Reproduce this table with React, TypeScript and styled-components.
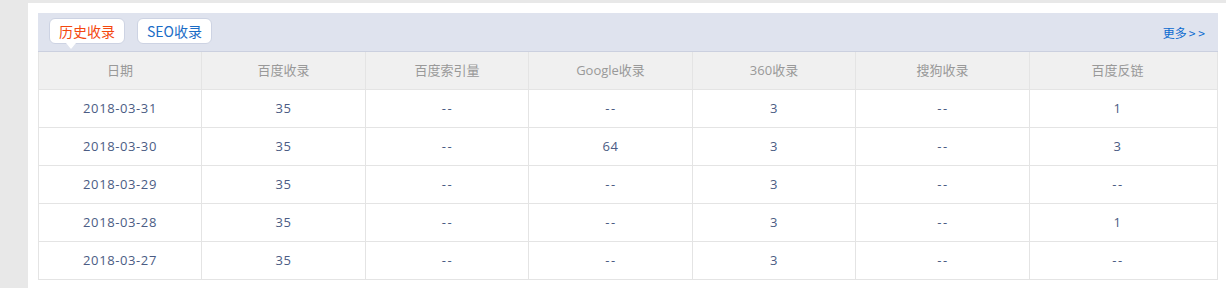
import React from "react";
import styled, { createGlobalStyle } from "styled-components";

const GlobalStyle = createGlobalStyle`
  html, body { margin: 0; padding: 0; }
  body {
    background: #e8e8e8;
    font-family: "Open Sans", "Noto Sans CJK SC", sans-serif;
  }
`;

const Panel = styled.div`
  margin: 3px 0 0 28px;
  padding: 10px;
  background: #fff;
  width: 1180px;
  height: 275px;
`;

const Box = styled.div`
  width: 1180px;
`;

const TabBar = styled.div`
  display: flex;
  align-items: flex-start;
  height: 39px;
  box-sizing: border-box;
  padding: 5px 10px 0 11px;
  gap: 12px;
  background: #dfe3ee;
  border-bottom: 1px solid #cbd0df;
`;

const Tab = styled.div<{ $active?: boolean }>`
  position: relative;
  height: 26px;
  box-sizing: border-box;
  padding: 0 9px;
  border: 1px solid #cdd3e3;
  border-radius: 6px;
  background: #fff;
  font-family: "Noto Sans CJK SC", sans-serif;
  font-size: 14px;
  line-height: 24px;
  color: ${(p) => (p.$active ? "#f4480f" : "#1a6cc6")};
  cursor: pointer;
  ${(p) =>
    p.$active &&
    `
    &::after {
      content: "";
      position: absolute;
      left: 16px;
      bottom: -6px;
      width: 0;
      height: 0;
      border-left: 5px solid transparent;
      border-right: 5px solid transparent;
      border-top: 6px solid #fff;
    }
  `}
`;

const More = styled.a`
  margin-left: auto;
  align-self: center;
  margin-top: -4px;
  font-family: "Noto Sans CJK SC", sans-serif;
  font-size: 12px;
  color: #0b6bd0;
  text-decoration: none;
`;

const Arrows = styled.span`
  letter-spacing: 3px;
  margin-left: 2px;
`;

const Table = styled.div`
  border-right: 1px solid #e4e4e4;
`;

const Row = styled.div<{ $head?: boolean }>`
  display: grid;
  grid-template-columns: 163px 164px 163px 164px 163px 174px 188px;
  height: 38px;
  box-sizing: border-box;
  border-bottom: 1px solid #e4e4e4;
  background: ${(p) => (p.$head ? "#f0f0f0" : "#fff")};
  color: ${(p) => (p.$head ? "#999" : "#4b5c84")};
  font-size: 13px;
  letter-spacing: ${(p) => (p.$head ? "0" : "0.6px")};
`;

const Cell = styled.div<{ $empty?: boolean }>`
  display: flex;
  align-items: center;
  justify-content: center;
  border-left: 1px solid #e4e4e4;
  line-height: 1;
  ${(p) => p.$empty && "letter-spacing: 1.5px; padding-left: 1px;"}
  &:last-child {
    padding-right: 12px;
  }
`;

const headers = ["日期", "百度收录", "百度索引量", "Google收录", "360收录", "搜狗收录", "百度反链"];

const rows = [
  ["2018-03-31", "35", "--", "--", "3", "--", "1"],
  ["2018-03-30", "35", "--", "64", "3", "--", "3"],
  ["2018-03-29", "35", "--", "--", "3", "--", "--"],
  ["2018-03-28", "35", "--", "--", "3", "--", "1"],
  ["2018-03-27", "35", "--", "--", "3", "--", "--"],
];

export default function App() {
  return (
    <>
      <GlobalStyle />
      <Panel>
        <Box>
          <TabBar>
            <Tab $active>历史收录</Tab>
            <Tab>SEO收录</Tab>
            <More href="#">
              更多<Arrows>&gt;&gt;</Arrows>
            </More>
          </TabBar>
          <Table>
            <Row $head>
              {headers.map((h) => (
                <Cell key={h}>{h}</Cell>
              ))}
            </Row>
            {rows.map((r) => (
              <Row key={r[0]}>
                {r.map((c, i) => (
                  <Cell key={i} $empty={c === "--"}>
                    {c}
                  </Cell>
                ))}
              </Row>
            ))}
          </Table>
        </Box>
      </Panel>
    </>
  );
}
